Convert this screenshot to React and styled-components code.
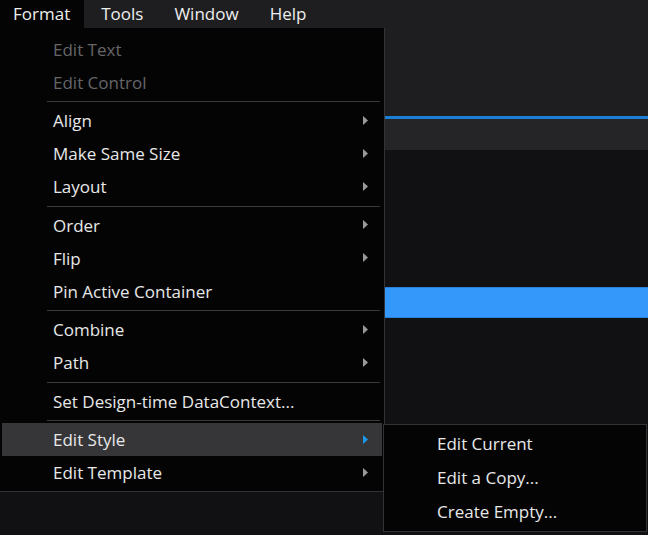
import React from "react";
import styled, { createGlobalStyle } from "styled-components";

const Global = createGlobalStyle`
  html, body { margin: 0; padding: 0; background: #111113; }
  body { font-family: "Open Sans", "Noto Sans", sans-serif; }
  * { box-sizing: border-box; }
`;

const Screen = styled.div`
  position: relative;
  width: 648px;
  height: 535px;
  overflow: hidden;
  display: flex;
  flex-direction: column;
  background: #111113;
  font-family: "Open Sans", "Noto Sans", sans-serif;
  font-size: 17px;
  color: #f1f1f1;
`;

const MenuBar = styled.div`
  display: flex;
  height: 28px;
  background: #1e1e21;
  flex: none;
`;

const MenuTitle = styled.div`
  display: flex;
  align-items: center;
  height: 28px;
  padding: ${(p) => (p.$open ? "0 14px 0 13px" : "0 14px 0 17px")};
  background: ${(p) => (p.$open ? "#040405" : "transparent")};
  color: #eeeeee;
  line-height: 28px;
`;

const TopPanel = styled.div`
  height: 88px;
  background: #1e1e21;
  flex: none;
`;

const AccentLine = styled.div`
  height: 3px;
  background: #1b7fd6;
  flex: none;
`;

const TabStrip = styled.div`
  height: 31px;
  background: #252528;
  flex: none;
`;

const ListArea = styled.div`
  flex: 1;
  background: #111113;
  padding: 137px 0 0 2px;
`;

const SelectedRow = styled.div`
  height: 31px;
  background: #3398fa;
  border-top: 1px solid #2a80d6;
  border-bottom: 1px solid #2a80d6;
`;

const Dropdown = styled.div`
  position: absolute;
  top: 28px;
  left: 0;
  width: 385px;
  padding: 4px 2px 2px 2px;
  background: #040405;
  border-right: 1px solid #333337;
  border-bottom: 1px solid #333337;
  display: flex;
  flex-direction: column;
`;

const SubMenu = styled.div`
  position: absolute;
  top: 424px;
  left: 383px;
  width: 264px;
  height: 108px;
  padding: 2px 2px 1px 2px;
  background: #040405;
  border: 1px solid #333337;
  display: flex;
  flex-direction: column;
`;

const Item = styled.div`
  display: flex;
  align-items: center;
  height: ${(p) => (p.$sub ? "34px" : "33px")};
  line-height: ${(p) => (p.$sub ? "34px" : "33px")};
  padding: 0 14px 0 51px;
  color: ${(p) => (p.$disabled ? "#666668" : "#e8e8e8")};
  background: ${(p) => (p.$active ? "#363638" : "transparent")};
  white-space: nowrap;
`;

const Label = styled.span`
  flex: 1;
  padding-top: ${(p) => (p.$sub ? "0" : "1px")};
`;

const Separator = styled.div`
  height: 1px;
  margin: 3px 2px 1.5px 45px;
  background: #3a3a3e;
`;

const Arrow = ({ active }) => (
  <svg width="5" height="9" viewBox="0 0 5 9" style={{ flex: "none" }}>
    <polygon points="0,0 5,4.5 0,9" fill={active ? "#1c97ea" : "#9a9a9c"} />
  </svg>
);

const groups = [
  [
    { label: "Edit Text", disabled: true },
    { label: "Edit Control", disabled: true },
  ],
  [
    { label: "Align", sub: true },
    { label: "Make Same Size", sub: true },
    { label: "Layout", sub: true },
  ],
  [
    { label: "Order", sub: true },
    { label: "Flip", sub: true },
    { label: "Pin Active Container" },
  ],
  [
    { label: "Combine", sub: true },
    { label: "Path", sub: true },
  ],
  [{ label: "Set Design-time DataContext..." }],
  [
    { label: "Edit Style", sub: true, active: true },
    { label: "Edit Template", sub: true },
  ],
];

const subItems = ["Edit Current", "Edit a Copy...", "Create Empty..."];

export default function App() {
  return (
    <Screen>
      <Global />
      <MenuBar>
        <MenuTitle $open>Format</MenuTitle>
        <MenuTitle>Tools</MenuTitle>
        <MenuTitle>Window</MenuTitle>
        <MenuTitle>Help</MenuTitle>
      </MenuBar>
      <TopPanel />
      <AccentLine />
      <TabStrip />
      <ListArea>
        <SelectedRow />
      </ListArea>

      <Dropdown>
        {groups.map((g, gi) => (
          <React.Fragment key={gi}>
            {gi > 0 && <Separator />}
            {g.map((it) => (
              <Item key={it.label} $disabled={it.disabled} $active={it.active}>
                <Label>{it.label}</Label>
                {it.sub && <Arrow active={it.active} />}
              </Item>
            ))}
          </React.Fragment>
        ))}
      </Dropdown>

      <SubMenu>
        {subItems.map((s) => (
          <Item key={s} $sub>
            <Label $sub>{s}</Label>
          </Item>
        ))}
      </SubMenu>
    </Screen>
  );
}
